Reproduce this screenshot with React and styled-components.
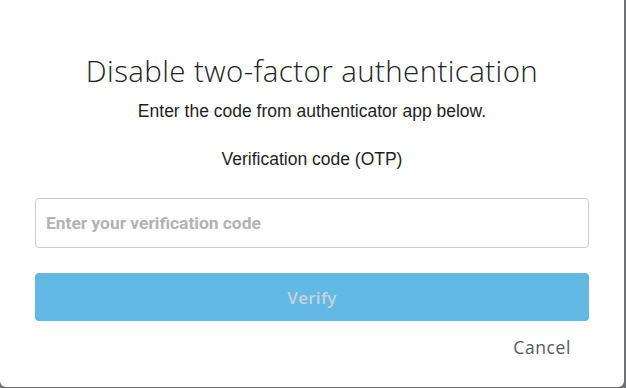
import styled, { createGlobalStyle } from "styled-components";

const GlobalStyle = createGlobalStyle`
  html, body {
    margin: 0;
    padding: 0;
    background: #6f7378;
  }
  * {
    box-sizing: border-box;
  }
`;

// Caja del modal, recortada por arriba
const Modal = styled.div`
  width: 624px;
  height: 387px;
  background: #ffffff;
  border-radius: 0 0 6px 6px;
  padding: 53px 35px 0 35px;
  display: flex;
  flex-direction: column;
  align-items: stretch;
`;

const Title = styled.h2`
  margin: 0;
  font-family: "Open Sans", "Lato", sans-serif;
  font-weight: 300;
  font-size: 29.5px;
  line-height: 36px;
  color: #222222;
  text-align: center;
  letter-spacing: 0.4px;
`;

const Text = styled.p`
  margin: ${(props) => props.margin || "0"};
  font-family: "Liberation Sans", Arial, sans-serif;
  font-size: 17.5px;
  line-height: 20px;
  color: #1e1e1e;
  text-align: center;
`;

const Input = styled.input`
  margin-top: 29px;
  height: 50px;
  width: 100%;
  border: 1px solid #cccccc;
  border-radius: 4px;
  padding: 0 10px;
  font-family: "Roboto", "Liberation Sans", sans-serif;
  font-size: 17.4px;
  font-weight: 700;
  color: #333;
  outline: none;
  &::placeholder {
    color: #b3b3b3;
  }
`;

const VerifyButton = styled.button`
  margin-top: 25px;
  height: 48px;
  width: 100%;
  border: none;
  border-radius: 4px;
  background: #63b9e5;
  color: #c9d3da;
  font-family: "Open Sans", "Lato", sans-serif;
  font-weight: 600;
  font-size: 17px;
  letter-spacing: 0.3px;
  cursor: not-allowed;
`;

const Footer = styled.div`
  margin-top: 16px;
  display: flex;
  justify-content: flex-end;
  padding-right: 18px;
`;

const CancelButton = styled.button`
  background: none;
  border: none;
  padding: 0;
  font-family: "Open Sans", "Lato", sans-serif;
  font-weight: 500;
  font-size: 17.5px;
  letter-spacing: 0.6px;
  line-height: 20px;
  color: #55595e;
  cursor: pointer;
`;

const App = () => {
  return (
    <>
      <GlobalStyle />
      <Modal>
        <Title>Disable two-factor authentication</Title>
        <Text margin="12px 0 0 0">Enter the code from authenticator app below.</Text>
        <Text margin="28px 0 0 0">Verification code (OTP)</Text>
        <Input placeholder="Enter your verification code" />
        <VerifyButton disabled>Verify</VerifyButton>
        <Footer>
          <CancelButton>Cancel</CancelButton>
        </Footer>
      </Modal>
    </>
  );
};

export default App;
